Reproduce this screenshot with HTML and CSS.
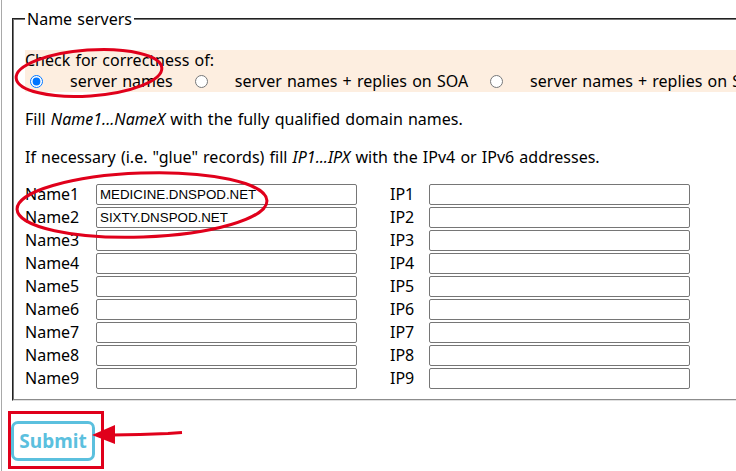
FILE: index.html
```html
<!DOCTYPE html>
<html>
<head>
<meta charset="utf-8">
<link rel="stylesheet" href="styles.css">
</head>
<body>
<div class="page">
  <fieldset class="ns">
    <legend>Name servers</legend>
    <div class="check">
      <div class="check-title">Check for correctness of:</div>
      <div class="opts">
        <label class="opt"><input type="radio" name="t" checked><span>server names</span></label>
        <label class="opt"><input type="radio" name="t"><span>server names + replies on SOA</span></label>
        <label class="opt"><input type="radio" name="t"><span>server names + replies on SOA + NS</span></label>
      </div>
    </div>
    <p class="note">Fill <i>Name1...NameX</i> with the fully qualified domain names.</p>
    <p class="note">If necessary (i.e. "glue" records) fill <i>IP1...IPX</i> with the IPv4 or IPv6 addresses.</p>
    <div class="grid">
      <span class="lbl">Name1</span><input class="fld" type="text" value="MEDICINE.DNSPOD.NET"><span></span><span class="lbl">IP1</span><input class="fld" type="text">
      <span class="lbl">Name2</span><input class="fld" type="text" value="SIXTY.DNSPOD.NET"><span></span><span class="lbl">IP2</span><input class="fld" type="text">
      <span class="lbl">Name3</span><input class="fld" type="text"><span></span><span class="lbl">IP3</span><input class="fld" type="text">
      <span class="lbl">Name4</span><input class="fld" type="text"><span></span><span class="lbl">IP4</span><input class="fld" type="text">
      <span class="lbl">Name5</span><input class="fld" type="text"><span></span><span class="lbl">IP5</span><input class="fld" type="text">
      <span class="lbl">Name6</span><input class="fld" type="text"><span></span><span class="lbl">IP6</span><input class="fld" type="text">
      <span class="lbl">Name7</span><input class="fld" type="text"><span></span><span class="lbl">IP7</span><input class="fld" type="text">
      <span class="lbl">Name8</span><input class="fld" type="text"><span></span><span class="lbl">IP8</span><input class="fld" type="text">
      <span class="lbl">Name9</span><input class="fld" type="text"><span></span><span class="lbl">IP9</span><input class="fld" type="text">
    </div>
  </fieldset>
  <div class="actions">
    <button class="submit" type="button">Submit</button>
  </div>
  <svg class="marks" width="736" height="471" viewBox="0 0 736 471">
    <ellipse cx="89" cy="73" rx="73" ry="23" transform="rotate(-4 89 73)" fill="none" stroke="#e0001b" stroke-width="3"/>
    <ellipse cx="142" cy="205" rx="125" ry="32" transform="rotate(-2 142 205)" fill="none" stroke="#e0001b" stroke-width="3"/>
    <rect x="9.5" y="412.5" width="93" height="55" fill="none" stroke="#e0001b" stroke-width="3"/>
    <polygon points="92,435 115,425 115,444" fill="#e0001b"/>
    <path d="M112 435 L140 434.5 L168 433.5 L182 432.5" fill="none" stroke="#e0001b" stroke-width="3"/>
  </svg>
</div>
</body>
</html>
```
FILE: styles.css
```css
html, body {
  margin: 0;
  padding: 0;
  background: #ffffff;
  overflow: hidden;
}
body {
  font-family: "Noto Sans", "Open Sans", sans-serif;
  font-size: 16px;
  word-spacing: 1px;
  color: #000;
}
.page {
  position: relative;
  margin-left: 1px;
  border-left: 1px solid #a9a9a9;
  min-height: 471px;
  padding-top: 8px;
  width: 1000px;
}
.ns {
  margin: 0 0 0 10px;
  border: 2px groove #d4d4d4;
  border-color: #767676 #e0e0e0 #e0e0e0 #767676;
  padding: 20px 10px 10px 11px;
  width: 900px;
}
.ns legend {
  padding: 0 2px;
  line-height: 22px;
  font-size: 16px;
}
.check {
  background: #fdeee0;
  line-height: 21px;
}
.opts {
  display: flex;
  align-items: center;
  white-space: nowrap;
}
.opt {
  display: flex;
  align-items: center;
}
.opt input {
  margin: 0 3px 0 5px;
  width: 13px;
  height: 13px;
}
.opt span {
  margin-left: 24px;
  margin-right: 17px;
}
.note {
  margin: 16px 0;
  line-height: 22px;
}
.grid {
  display: grid;
  grid-template-columns: 71px 261px 33px 39px 261px;
  grid-auto-rows: 21px;
  row-gap: 2px;
  align-items: center;
}
.lbl {
  line-height: 21px;
}
.fld {
  box-sizing: border-box;
  width: 261px;
  height: 21px;
  margin: 0;
  padding: 0 3px;
  border: 1px solid #767676;
  border-radius: 2px;
  font-family: "Liberation Sans", Arial, sans-serif;
  font-size: 13.333px;
  word-spacing: 0;
  color: #000;
  background: #fff;
}
.actions {
  padding: 20px 0 0 9px;
}
.submit {
  box-sizing: border-box;
  width: 84px;
  height: 40px;
  padding: 0;
  border: 3px solid #5bc0de;
  border-radius: 7px;
  background: #fff;
  color: #5bc0de;
  font-family: "Noto Sans", "Open Sans", sans-serif;
  font-weight: bold;
  font-size: 19px;
}
.marks {
  position: absolute;
  top: 0;
  left: -2px;
  pointer-events: none;
}
```
